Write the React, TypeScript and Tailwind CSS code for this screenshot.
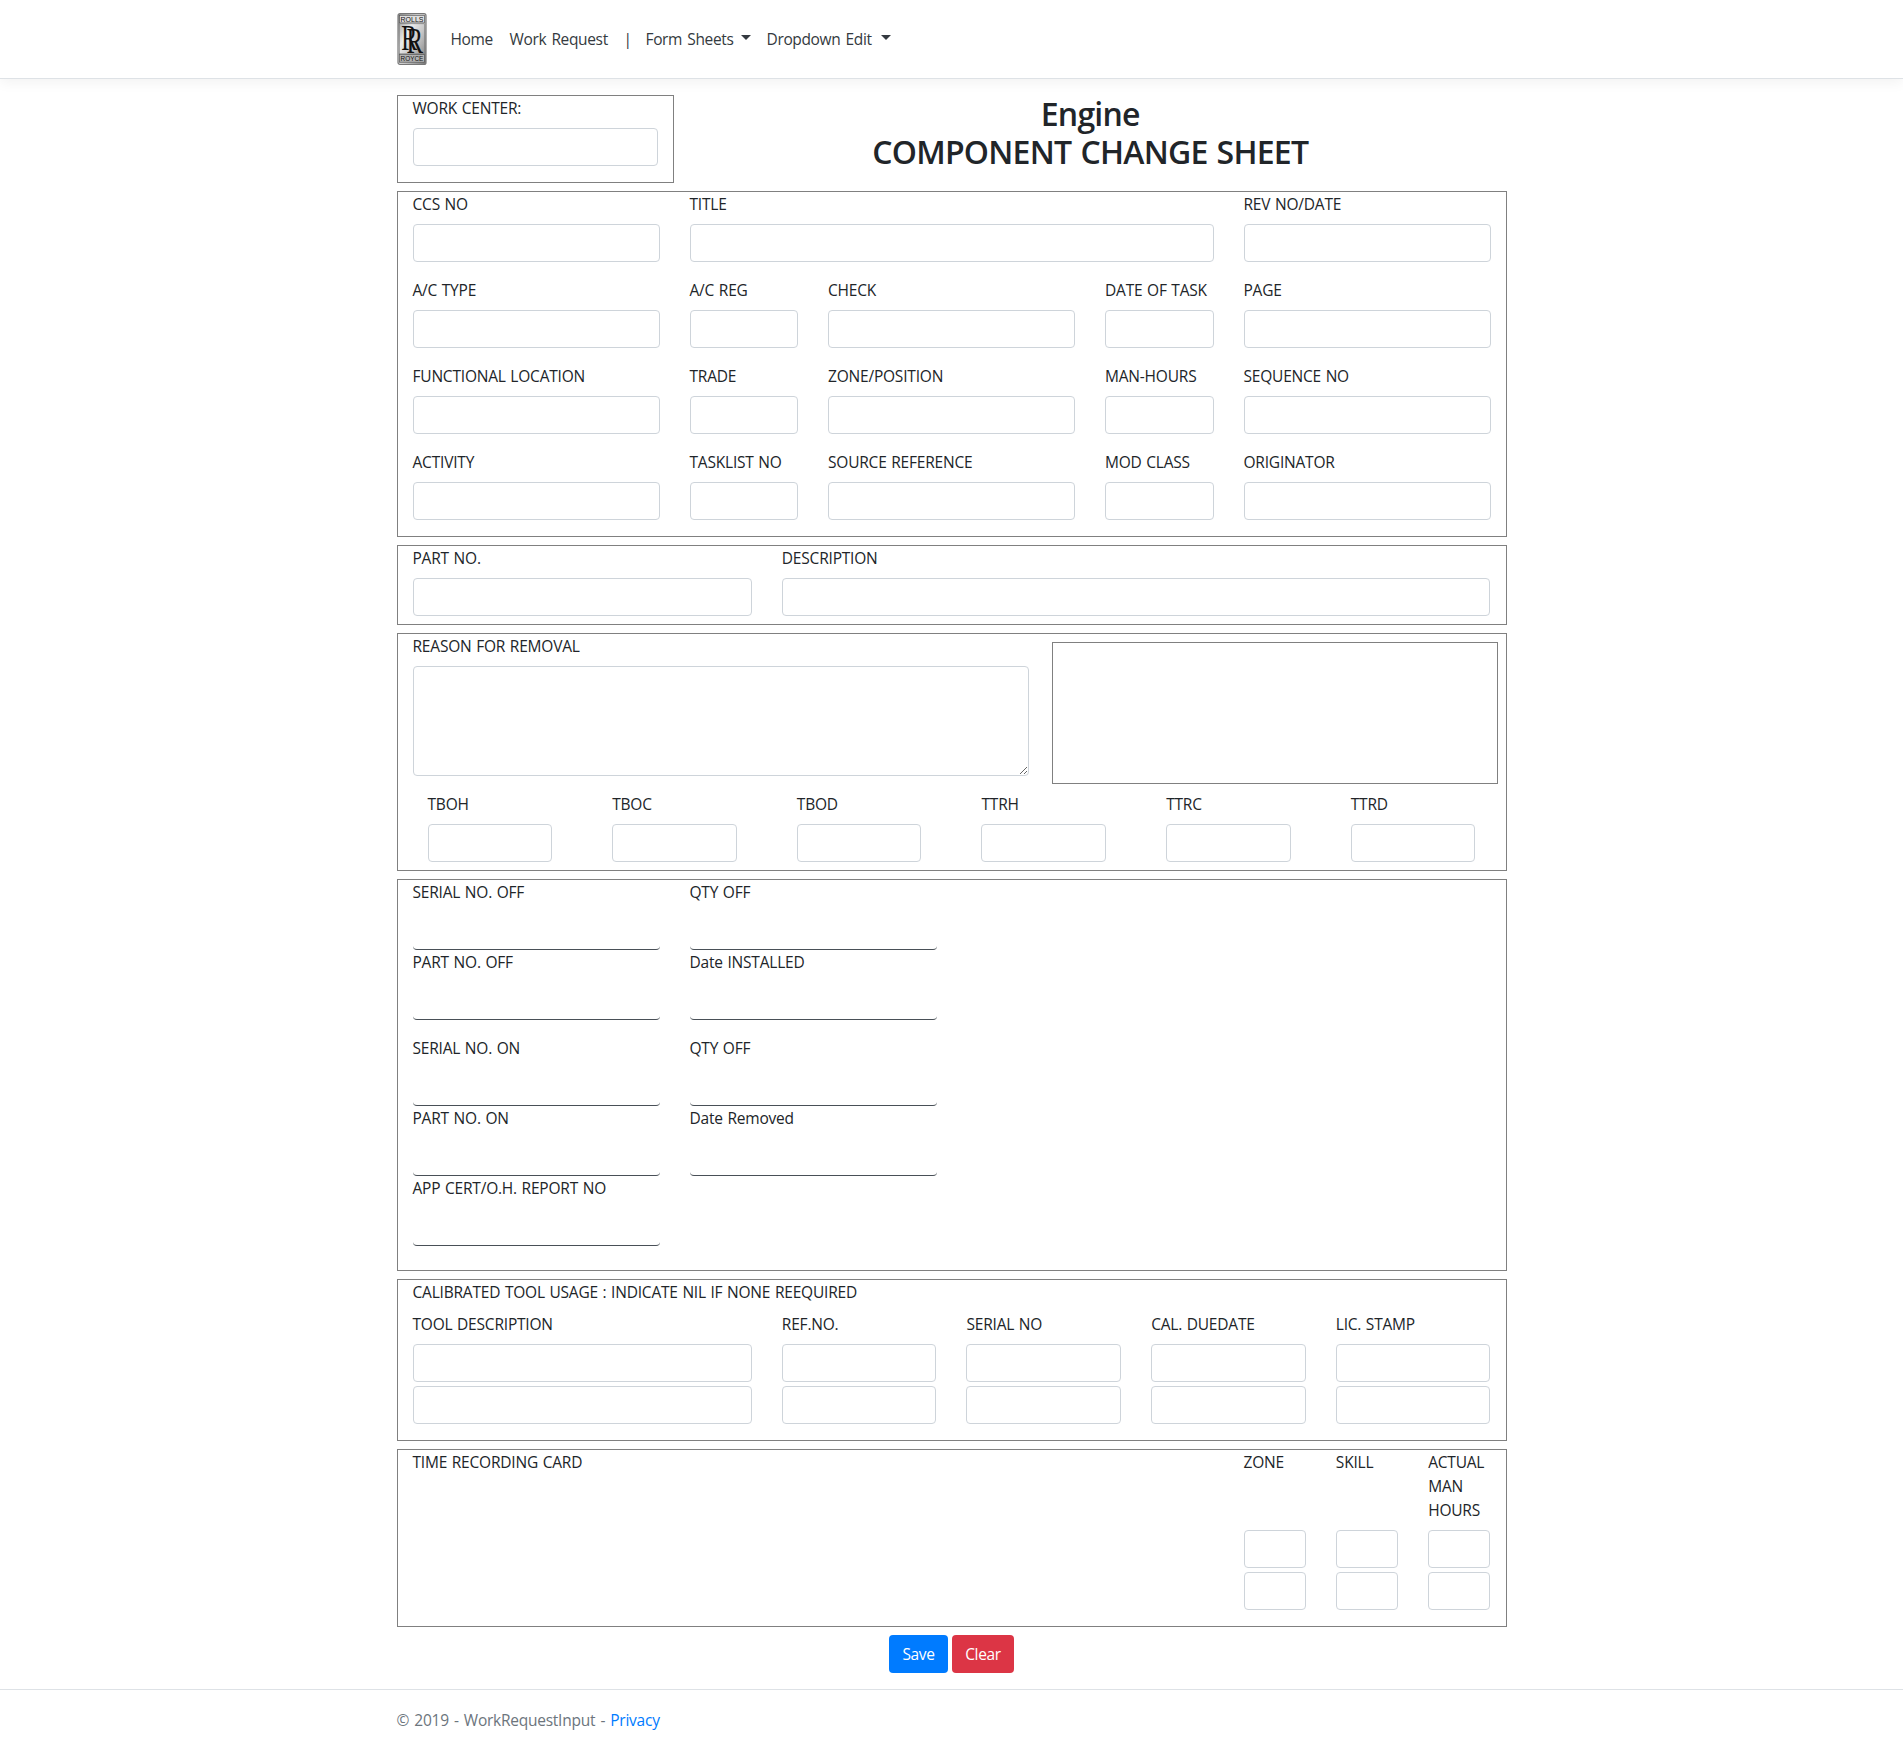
import React from "react";

const control =
  "block w-full h-[38px] rounded-[4px] border border-[#ced4da] bg-white px-3 text-[#495057] outline-none";

const caps = "tracking-[-0.2px] [word-spacing:0.8px]";

function Label({ children }: { children: React.ReactNode }) {
  return <label className={`mb-2 block whitespace-nowrap ${caps}`}>{children}</label>;
}

function Field({ label, span, gap = "pb-4" }: { label: string; span: string; gap?: string }) {
  return (
    <div className={`px-[15px] ${gap} ${span}`}>
      <Label>{label}</Label>
      <input className={control} />
    </div>
  );
}

function LineField({ label }: { label: string }) {
  return (
    <div className="col-span-3 px-[15px]">
      <Label>{label}</Label>
      <input className="block h-[38px] w-full rounded-[4px] border-b border-[#495057] bg-white px-3 outline-none" />
    </div>
  );
}

function Panel({ children, className = "pr-[0.05px]" }: { children: React.ReactNode; className?: string }) {
  return (
    <section className={`mt-2 grid grid-cols-12 border border-[#808080] ${className}`}>{children}</section>
  );
}

function Caret() {
  return (
    <span className="mb-[3px] inline-block border-x-[5px] border-t-[5px] border-x-transparent border-t-[#343a40]" />
  );
}

function Logo() {
  return (
    <svg width="30" height="52" viewBox="0 0 30 52" className="block overflow-visible tracking-normal">
      <defs>
        <linearGradient id="plate" x1="0" y1="0" x2="1" y2="1">
          <stop offset="0" stopColor="#8c8c8c" />
          <stop offset="0.35" stopColor="#ececec" />
          <stop offset="0.6" stopColor="#c8c8c8" />
          <stop offset="1" stopColor="#777777" />
        </linearGradient>
      </defs>
      <rect x="1" y="0.7" width="28" height="50.8" rx="2" fill="url(#plate)" stroke="#777" strokeWidth="1.2" />
      <rect x="2.6" y="2.3" width="24.8" height="7.6" fill="#dedede" stroke="#555" strokeWidth="0.7" />
      <rect x="2.6" y="10.8" width="24.8" height="30" fill="none" stroke="#777" strokeWidth="0.6" />
      <rect x="2.6" y="41.6" width="24.8" height="7.6" fill="#b2b2b2" stroke="#555" strokeWidth="0.7" />
      <g fill="#111" fontFamily="'Liberation Sans', sans-serif" fontSize="7.6">
        <text x="3.6" y="8.8" textLength="22.8" lengthAdjust="spacingAndGlyphs">ROLLS</text>
        <text x="3.6" y="48.1" textLength="22.8" lengthAdjust="spacingAndGlyphs">ROYCE</text>
      </g>
      <g fill="#111" fontFamily="'Liberation Serif', serif" fontSize="36">
        <text x="4.2" y="36.6" textLength="16" lengthAdjust="spacingAndGlyphs">R</text>
        <text x="9.4" y="39.8" textLength="16.5" lengthAdjust="spacingAndGlyphs">R</text>
      </g>
    </svg>
  );
}

// Narrow fields take one and a half twelfths, so these spans are on a 24-column grid.
const details: [string, string][] = [
  ["CCS NO", "col-span-6"],
  ["TITLE", "col-span-12"],
  ["REV NO/DATE", "col-span-6"],
  ["A/C TYPE", "col-span-6"],
  ["A/C REG", "col-span-3"],
  ["CHECK", "col-span-6"],
  ["DATE OF TASK", "col-span-3"],
  ["PAGE", "col-span-6"],
  ["FUNCTIONAL LOCATION", "col-span-6"],
  ["TRADE", "col-span-3"],
  ["ZONE/POSITION", "col-span-6"],
  ["MAN-HOURS", "col-span-3"],
  ["SEQUENCE NO", "col-span-6"],
  ["ACTIVITY", "col-span-6"],
  ["TASKLIST NO", "col-span-3"],
  ["SOURCE REFERENCE", "col-span-6"],
  ["MOD CLASS", "col-span-3"],
  ["ORIGINATOR", "col-span-6"],
];

const tools: [string, string][] = [
  ["TOOL DESCRIPTION", "col-span-4"],
  ["REF.NO.", "col-span-2"],
  ["SERIAL NO", "col-span-2"],
  ["CAL. DUEDATE", "col-span-2"],
  ["LIC. STAMP", "col-span-2"],
];

export default function App() {
  return (
    <div className="min-h-[1750px] bg-white font-['Open_Sans',sans-serif] text-[15.5px] leading-6 tracking-[-0.35px] text-[#212529] [word-spacing:1.5px]">
      <header className="h-[79px] border-b border-[#dee2e6] bg-white shadow-[0_4px_12px_rgba(0,0,0,0.05)]">
        <nav className="mx-auto flex h-[78px] w-[1110px] items-center text-[#343a40]">
          <Logo />
          <div className="ml-6 flex items-center whitespace-nowrap">
            <a className="w-[59px]">Home</a>
            <a className="w-[114px]">Work Request</a>
            <span className="w-[22px]">|</span>
            <a className="flex w-[121px] items-center">
              <span className="w-[95px]">Form Sheets</span>
              <Caret />
            </a>
            <a className="flex items-center">
              <span className="w-[114px]">Dropdown Edit</span>
              <Caret />
            </a>
          </div>
        </nav>
      </header>

      <main className="mx-auto w-[1110px] pt-4">
        <div className="flex">
          <div className="w-[277.5px] border border-[#808080] px-[15px] pb-4">
            <Label>WORK CENTER:</Label>
            <input className={control} />
          </div>
          <h2 className="flex-1 text-center text-[32px] font-semibold leading-[38.4px] tracking-[-0.75px]">
            Engine
            <br />
            COMPONENT CHANGE SHEET
          </h2>
        </div>

        <section className="mt-2 grid grid-cols-24 border border-[#808080]">
          {details.map(([label, span]) => (
            <Field key={label} label={label} span={span} />
          ))}
        </section>

        <Panel>
          <Field label="PART NO." span="col-span-4" gap="pb-2" />
          <Field label="DESCRIPTION" span="col-span-8" gap="pb-2" />
        </Panel>

        <Panel>
          <div className="col-span-7 px-[15px] pb-4">
            <Label>REASON FOR REMOVAL</Label>
            <textarea className="block h-[110px] w-full rounded-[4px] border border-[#ced4da] bg-white px-3 py-1.5 outline-none" />
          </div>
          <div className="col-span-5 my-2 ml-2 mr-[7.9px] border border-[#808080]" />
          {["TBOH", "TBOC", "TBOD", "TTRH", "TTRC", "TTRD"].map((label) => (
            <div key={label} className="col-span-2 px-[30px] pb-2">
              <Label>{label}</Label>
              <input className={control} />
            </div>
          ))}
        </Panel>

        <Panel className="pb-6">
          <LineField label="SERIAL NO. OFF" />
          <LineField label="QTY OFF" />
          <div className="col-span-6" />
          <LineField label="PART NO. OFF" />
          <LineField label="Date INSTALLED" />
          <div className="col-span-12 h-4" />
          <LineField label="SERIAL NO. ON" />
          <LineField label="QTY OFF" />
          <div className="col-span-6" />
          <LineField label="PART NO. ON" />
          <LineField label="Date Removed" />
          <div className="col-span-6" />
          <LineField label="APP CERT/O.H. REPORT NO" />
        </Panel>

        <Panel>
          <div className="col-span-12 px-[15px]">
            <Label>CALIBRATED TOOL USAGE : INDICATE NIL IF NONE REEQUIRED</Label>
          </div>
          {tools.map(([label, span]) => (
            <div key={label} className={`px-[15px] pb-4 ${span}`}>
              <Label>{label}</Label>
              <div className="space-y-1">
                <input className={control} />
                <input className={control} />
              </div>
            </div>
          ))}
        </Panel>

        <Panel className="">
          <div className="col-span-9 px-[15px]">
            <Label>TIME RECORDING CARD</Label>
          </div>
          {["ZONE", "SKILL", "ACTUAL MAN HOURS"].map((label) => (
            <div key={label} className="px-[15px] pb-4 last:pr-[15.05px]">
              <label className={`mb-2 block h-[72px] ${caps}`}>{label}</label>
              <div className="space-y-1">
                <input className={control} />
                <input className={control} />
              </div>
            </div>
          ))}
        </Panel>

        <div className="mt-2 flex justify-center gap-1">
          <button className="h-[38px] w-[59px] rounded-[4px] bg-[#007bff] text-white">Save</button>
          <button className="h-[38px] w-[62px] rounded-[4px] bg-[#dc3545] text-white">Clear</button>
        </div>
      </main>

      <footer className="mt-4 border-t border-[#dee2e6] text-[#6c757d]">
        <div className="mx-auto h-[60px] w-[1110px] pt-[18px] tracking-[-0.25px] [word-spacing:1.4px]">
          © 2019 - WorkRequestInput - <a className="text-[#007bff]">Privacy</a>
        </div>
      </footer>
    </div>
  );
}
